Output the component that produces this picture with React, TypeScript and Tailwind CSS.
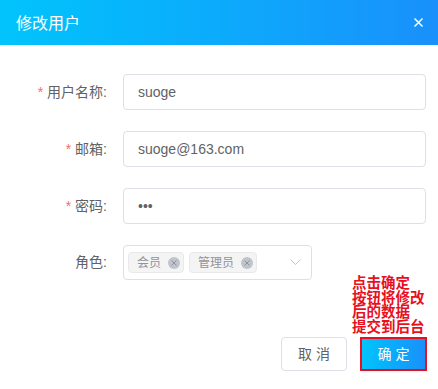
import React from "react";

const font = { fontFamily: '"Liberation Sans", "Noto Sans CJK SC", sans-serif' };

function Label({ text, required }: { text: string; required?: boolean }) {
  return (
    <div className="w-[111px] shrink-0 text-right text-[14px] text-[#606266] pr-[4px]">
      {required && <span className="text-[#f56c6c] mr-[4px]">*</span>}
      {text}:
    </div>
  );
}

function Field({ label, value, type = "text" }: { label: string; value: string; type?: string }) {
  return (
    <div className="flex items-center gap-[12px]">
      <Label text={label} required />
      <input
        readOnly
        type={type}
        value={value}
        className="h-[36px] w-[303px] rounded-[4px] border border-[#dcdfe6] bg-white px-[14px] text-[14px] text-[#606266] outline-none"
        style={font}
      />
    </div>
  );
}

function Tag({ text }: { text: string }) {
  return (
    <span className="flex h-[21px] items-center gap-[7px] rounded-[4px] border border-[#e9e9eb] bg-[#f4f4f5] pl-[8px] pr-[3px] text-[12px] text-[#909399]">
      {text}
      <span className="flex h-[12px] w-[12px] items-center justify-center rounded-full bg-[#c0c4cc]">
        <svg width="6" height="6" viewBox="0 0 6 6" stroke="#909399" strokeWidth="1">
          <path d="M0.5 0.5L5.5 5.5M5.5 0.5L0.5 5.5" />
        </svg>
      </span>
    </span>
  );
}

export default function App() {
  return (
    <div className="h-[389px] w-[438px] bg-white" style={font}>
      <div className="flex h-[45px] items-center justify-between bg-gradient-to-r from-[#02c4fb] to-[#1990fb] pl-[16px] pr-[15px]">
        <span className="pt-[3px] text-[16px] text-white">修改用户</span>
        <svg width="9" height="9" viewBox="0 0 9 9" stroke="white" strokeWidth="1.5">
          <path d="M0.5 0.5L8.5 8.5M8.5 0.5L0.5 8.5" />
        </svg>
      </div>

      <div className="flex flex-col gap-[21px] pt-[29px]">
        <Field label="用户名称" value="suoge" />
        <Field label="邮箱" value="suoge@163.com" />
        <Field label="密码" value="abc" type="password" />
        <div className="flex items-center gap-[12px]">
          <Label text="角色" />
          <div className="flex h-[35px] w-[189px] items-center gap-[5px] rounded-[4px] border border-[#dcdfe6] pl-[4px] pr-[10px]">
            <Tag text="会员" />
            <Tag text="管理员" />
            <svg className="ml-auto" width="11" height="7" viewBox="0 0 11 7" fill="none" stroke="#c0c4cc" strokeWidth="1">
              <path d="M0.5 0.5L5.5 5.5L10.5 0.5" />
            </svg>
          </div>
        </div>
      </div>

      <div className="relative mt-[57px] flex justify-end gap-[13px] pr-[11px]">
        <div className="absolute left-[352px] top-[-61px] w-[80px] text-[14.5px] font-bold leading-[14.5px] text-[#e8101e]">
          点击确定
          <br />
          按钮将修改
          <br />
          后的数据
          <br />
          提交到后台
        </div>
        <button className="h-[34px] w-[66px] rounded-[4px] border border-[#dcdfe6] bg-white text-[14px] text-[#606266]">
          取 消
        </button>
        <div className="h-[34px] w-[67px] border-2 border-[#e8101e] p-0">
          <button className="h-full w-full bg-gradient-to-r from-[#02c4fb] to-[#1990fb] text-[14px] text-white">
            确 定
          </button>
        </div>
      </div>
    </div>
  );
}
